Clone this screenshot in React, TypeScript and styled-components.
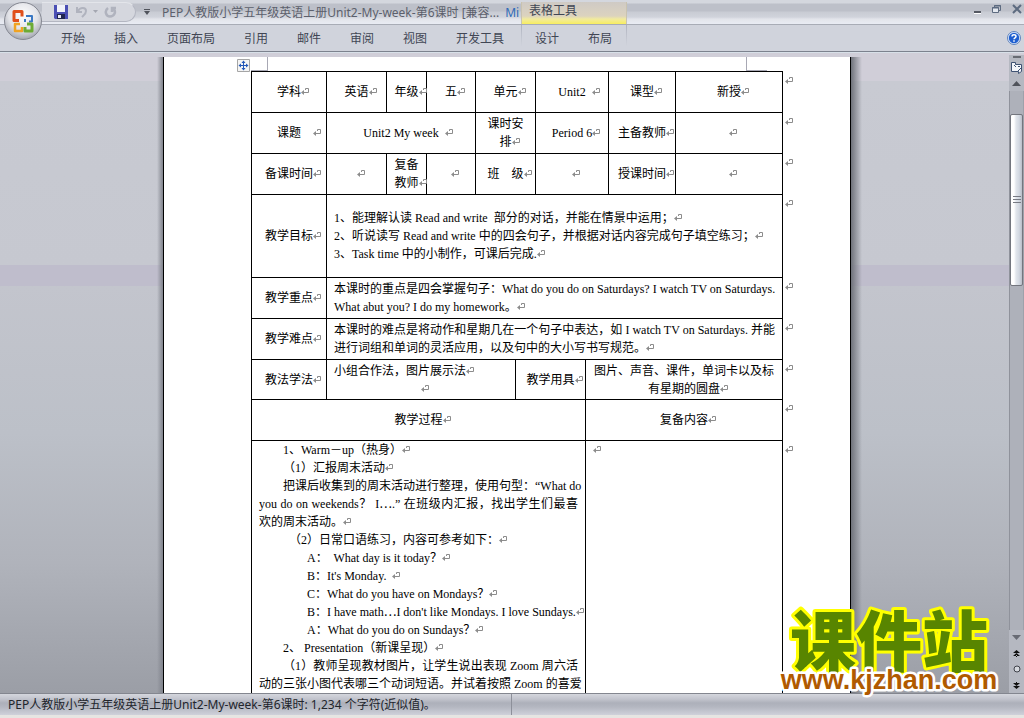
import React from "react";
import styled, { createGlobalStyle } from "styled-components";

const GlobalStyle = createGlobalStyle`
  * { box-sizing: border-box; }
  body { margin: 0; background: #d0ced8; }
  button { font: inherit; color: inherit; border: 0; padding: 0; background: none; }
`;

const Window = styled.div`
  position: relative;
  display: flex;
  flex-direction: column;
  height: 100vh;
  min-height: 300px;
  overflow: hidden;
  font: 12px/18px "Noto Sans", "Noto Sans CJK SC", sans-serif;
  color: #414654;
`;

const TitleBar = styled.header`
  display: grid;
  grid-template-columns: 162px 359px 106px 1fr;
  height: 24px;
  flex: none;
  background: linear-gradient(#d4d7de 0 3px, #bdc0c9 4px 11px, #c9ccd4 12px, #d0d3db 17px, #e2e4ea 19px, #e9ecf4 24px);
`;

const QuickAccess = styled.div`
  display: flex;
  align-items: center;
  padding-left: 42px;
  gap: 8px;
`;

const QuickPill = styled.div`
  display: flex;
  align-items: center;
  gap: 6px;
  width: 94px;
  height: 20px;
  padding-left: 12px;
  border: 1px solid #b3b6c1;
  border-top-color: #e3e5ea;
  border-left: 0;
  border-radius: 0 10px 10px 0;
  background: #d5d7de;
`;

const IconButton = styled.button`
  display: flex;
  align-items: center;
  justify-content: center;
`;

const Title = styled.div`
  display: flex;
  gap: 6px;
  overflow: hidden;
  white-space: nowrap;
  line-height: 26px;
  color: #5c606c;
`;

const AppName = styled.span`
  color: #2f6ab8;
`;

const ContextTitle = styled.div`
  margin-top: 2px;
  padding-left: 7px;
  line-height: 18px;
  border: 1px solid #c9c3b0;
  border-width: 0 1px;
  background: linear-gradient(#cfcac5, #dcd3bf 14px, #f1ea9f 17px, #f8ee60 22px);
`;

const WindowControls = styled.div`
  display: flex;
  justify-content: flex-end;
  gap: 10px;
  padding: 2px 2px 8px;
`;

const RibbonTabs = styled.nav`
  display: grid;
  grid-template-columns: 521px 106px 1fr;
  height: 28px;
  flex: none;
  border-top: 1px solid #a8acb6;
  border-bottom: 1px solid #7c828e;
  background: #d0d3dc;
`;

const TabGroup = styled.div<{ $context?: boolean }>`
  display: flex;
  gap: 29px;
  padding-top: 2px;
  padding-left: ${(p) => (p.$context ? 13 : 61)}px;
  border: 0 solid;
  border-width: ${(p) => (p.$context ? "0 1px" : "0")};
  border-image: linear-gradient(#aeb2be, #d0d3dc 80%) 1;
`;

const HelpSlot = styled.div`
  display: flex;
  justify-content: flex-end;
  padding-right: 3px;
`;

const OfficeButton = styled.button`
  position: absolute;
  left: 3px;
  top: 1px;
  width: 40px;
  height: 40px;
`;

const Workspace = styled.main`
  display: flex;
  flex: 1;
  min-height: 0;
  padding-top: 4px;
  border-top: 1px solid #d8e0e8;
  background: linear-gradient(
    #d0ced8 0 28px, #c8cad2 28px, #c6c8d0 212px, #bfbdcc 212px 233px,
    #c3c5cd 233px, #bcc0c8 380px, #b0b3bb 510px, #9b9ea6 640px
  );
`;

const Canvas = styled.div`
  display: flex;
  flex: 1;
  min-width: 0;
  justify-content: center;
  padding-left: 5px;
  overflow: hidden;
`;

const Shade = styled.div<{ $right?: boolean }>`
  width: 11px;
  background: ${(p) =>
    p.$right
      ? "linear-gradient(90deg, #6f727a, #6f727a00)"
      : "linear-gradient(270deg, #80838c, #80838c00 6px)"};
`;

const Page = styled.article`
  width: 688px;
  flex: none;
  padding: 0 0 0 87px;
  border: 1px solid #000;
  border-width: 0 1px;
  background: #fff;
  color: #000;
  font-family: "Liberation Serif", "Noto Sans CJK SC", serif;
`;

const MarginRow = styled.div`
  position: relative;
  display: flex;
  justify-content: space-between;
  width: 516px;
  height: 14px;
`;

const Corner = styled.i<{ $right?: boolean }>`
  width: ${(p) => (p.$right ? 21 : 17)}px;
  border: 1px solid #a8a8b4;
  border-width: ${(p) => (p.$right ? "0 0 1px 1px" : "0 1px 1px 0")};
`;

const MoveHandle = styled.button`
  position: absolute;
  left: -14px;
  top: 2px;
  width: 13px;
  height: 13px;
`;

const PlanTable = styled.table`
  width: 545px;
  table-layout: fixed;
  border-collapse: collapse;
`;

const Row = styled.tr<{ $h: number }>`
  height: ${(p) => p.$h}px;
`;

const Cell = styled.td<{ $text?: boolean; $top?: boolean }>`
  padding: 0 ${(p) => (p.$text ? 7 : 0)}px;
  border: 1px solid #000;
  text-align: ${(p) => (p.$text ? "left" : "center")};
  vertical-align: ${(p) => (p.$top ? "top" : "middle")};
  white-space: pre;
`;

const EndCell = styled.td`
  padding: 0 0 0 2px;
  vertical-align: top;
`;

const Line = styled.div<{ $indent?: number; $justify?: boolean; $center?: boolean }>`
  padding-left: ${(p) => p.$indent || 0}px;
  height: 18px;
  white-space: ${(p) => (p.$justify ? "nowrap" : "pre")};
  text-align: ${(p) => (p.$center ? "center" : "left")};
  text-align-last: ${(p) => (p.$justify ? "justify" : "auto")};
`;

const Han = styled.span`
  font-family: "Noto Sans CJK SC", sans-serif;
  line-height: 1;
`;

const MarkSvg = styled.svg<{ $gap: number }>`
  display: inline-block;
  width: 8px;
  height: 8px;
  margin-left: ${(p) => p.$gap}px;
  margin-right: ${(p) => -8 - p.$gap}px;
`;

const Mark = ({ gap = 0 }: { gap?: number }) => (
  <MarkSvg $gap={gap} viewBox="0 0 8 8" aria-hidden="true">
    <path d="M4.500 2V.5h3v4H2" fill="none" stroke="#8c8c8c" />
    <path d="M0 4.500L3 2v5z" fill="#8c8c8c" />
  </MarkSvg>
);

const ScrollColumn = styled.aside`
  display: flex;
  flex-direction: column;
  width: 15px;
  flex: none;
  margin-top: -2px;
`;

const ScrollButton = styled(IconButton)<{ $h: number }>`
  height: ${(p) => p.$h}px;
  flex: none;
  background: #b5b8c1;
`;

const Track = styled.div`
  flex: 1;
  min-height: 0;
  padding-top: 23px;
  border-left: 1px solid #8f929b;
  border-right: 1px solid #9ea1aa;
  background: #aeb1ba;
`;

const Thumb = styled.div`
  display: flex;
  align-items: center;
  justify-content: center;
  height: 172px;
  border: 1px solid #73767e;
  border-radius: 2px;
  background: linear-gradient(90deg, #fff 0 3px, #e2e6ec 5px, #d3d9e2 8px, #b9bec8);
`;

const StatusBar = styled.footer`
  display: grid;
  grid-template-columns: 512px 1fr;
  height: 25px;
  flex: none;
  border-top: 1px solid #83868f;
  border-bottom: 3px solid #e6e5e2;
  background: linear-gradient(#d4d6dd, #c2c4cd 5px, #adb0ba 9px, #b4b7c1 13px, #cfd1da 21px);
  color: #22252c;
`;

const StatusText = styled.div`
  padding-left: 8px;
  line-height: 21px;
  border-right: 1px solid #8d909a;
  white-space: nowrap;
`;

const Watermark = styled.svg`
  position: absolute;
  right: 14px;
  bottom: 18px;
  width: 240px;
  height: 90px;
  overflow: visible;
`;

const mainTabs = ["开始", "插入", "页面布局", "引用", "邮件", "审阅", "视图", "开发工具"];
const columns = [75, 60, 40, 49, 40, 20, 50, 23, 67, 107, 14];

const End = () => (
  <EndCell>
    <Mark />
  </EndCell>
);

export default function App() {
  return (
    <>
      <GlobalStyle />
      <Window>
        <TitleBar>
          <QuickAccess>
            <QuickPill>
              <IconButton aria-label="保存">
                <svg width="14" height="14" viewBox="0 0 14 14">
                  <path d="M0 0h14v14H1L0 13z" fill="#4a4fb4" />
                  <path d="M3 0h8v7H3z" fill="#f1f3fa" />
                  <path d="M3 9h8v5H3z" fill="#20264f" />
                  <path d="M4 10h3v3H4z" fill="#e8eaf5" />
                </svg>
              </IconButton>
              <IconButton aria-label="撤消">
                <svg width="24" height="12" viewBox="0 0 24 12" fill="none" stroke="#b0b3be" strokeWidth="2">
                  <path d="M3 1v5h5M4 5c2-4 8-4 8 0 0 3-2 4-4 6" />
                  <path d="M19 4h5l-2.500 3z" fill="#a4a7b1" stroke="none" />
                </svg>
              </IconButton>
              <IconButton aria-label="恢复">
                <svg width="14" height="12" viewBox="0 0 14 12" fill="none" stroke="#b0b3be" strokeWidth="2.500">
                  <path d="M4 2C0 5 2 10.500 6 10.500s7-4.500 3-8M8 6V2h4" />
                </svg>
              </IconButton>
            </QuickPill>
            <IconButton aria-label="自定义快速访问工具栏">
              <svg width="6" height="6" viewBox="0 0 6 6" fill="#50535c">
                <path d="M0 0h6v1H0zM0 2h6L3 6z" />
              </svg>
            </IconButton>
          </QuickAccess>
          <Title>
            <span>PEP人教版小学五年级英语上册Unit2-My-week-第6课时 [兼容...</span>
            <AppName>Mi</AppName>
          </Title>
          <ContextTitle>表格工具</ContextTitle>
          <WindowControls>
            <IconButton aria-label="最小化">
              <svg width="9" height="12" viewBox="0 0 9 12">
                <path d="M1 8h7v2H1z" fill="#555963" />
                <path d="M1 10h7v1H1z" fill="#fff" />
              </svg>
            </IconButton>
            <IconButton aria-label="还原">
              <svg width="10" height="12" viewBox="0 0 10 12" fill="none" stroke="#5d6b80">
                <path d="M2.500 4V2.500h6v5H7" />
                <path d="M.5 4.500h6v5h-6z" fill="#e4e8ef" />
                <path d="M0 5h7M2 3h7" />
              </svg>
            </IconButton>
            <IconButton aria-label="关闭">
              <svg width="10" height="12" viewBox="0 0 10 12" fill="none" stroke="#5d6b80" strokeWidth="2">
                <path d="M1 2l8 8M9 2l-8 8" />
              </svg>
            </IconButton>
          </WindowControls>
        </TitleBar>

        <RibbonTabs>
          <TabGroup>
            {mainTabs.map((t) => (
              <button key={t}>{t}</button>
            ))}
          </TabGroup>
          <TabGroup $context>
            <button>设计</button>
            <button>布局</button>
          </TabGroup>
          <HelpSlot>
            <IconButton aria-label="帮助">
              <svg width="14" height="14" viewBox="0 0 14 14">
                <circle cx="7" cy="7" r="6.500" fill="#dfe9f8" stroke="#5f83bd" />
                <circle cx="7" cy="7" r="5.200" fill="#1f5fd0" />
                <path d="M5 5.500C5 3.200 9 3.200 9 5.500 9 6.800 7 6.800 7 8.200M7 9.300v1.400" fill="none" stroke="#fff" strokeWidth="1.500" />
              </svg>
            </IconButton>
          </HelpSlot>
        </RibbonTabs>

        <Workspace>
          <Canvas>
            <Shade />
            <Page>
              <MarginRow>
                <Corner />
                <Corner $right />
                <MoveHandle aria-label="移动表格">
                  <svg width="13" height="13" viewBox="0 0 13 13">
                    <path d="M.5.5h12v12H.5z" fill="#f4f4f4" stroke="#a5a5a5" />
                    <path d="M6.500 3v7M3 6.500h7" stroke="#2458b8" />
                    <path d="M6.500 1.500l2 2.500h-4zM6.500 11.500l2-2.500h-4zM1.500 6.500L4 4.500v4zM11.500 6.500L9 4.500v4z" fill="#2458b8" />
                  </svg>
                </MoveHandle>
              </MarginRow>
              <PlanTable>
                <colgroup>
                  {columns.map((w, i) => (
                    <col key={i} style={{ width: w }} />
                  ))}
                </colgroup>
                <tbody>
                  <Row $h={41}>
                    <Cell>学科<Mark /></Cell>
                    <Cell>英语<Mark /></Cell>
                    <Cell>年级<Mark /></Cell>
                    <Cell>五<Mark /></Cell>
                    <Cell colSpan={2}>单元<Mark /></Cell>
                    <Cell colSpan={2}>Unit2<Mark gap={6} /></Cell>
                    <Cell>课型<Mark /></Cell>
                    <Cell>新授<Mark /></Cell>
                    <End />
                  </Row>
                  <Row $h={41}>
                    <Cell>课题<Mark gap={12} /></Cell>
                    <Cell colSpan={3}>Unit2 My week<Mark gap={6} /></Cell>
                    <Cell colSpan={2}>课时安{"\n"}排<Mark /></Cell>
                    <Cell colSpan={2}>Period 6<Mark /></Cell>
                    <Cell>主备教师<Mark /></Cell>
                    <Cell><Mark /></Cell>
                    <End />
                  </Row>
                  <Row $h={41}>
                    <Cell>备课时间<Mark /></Cell>
                    <Cell><Mark /></Cell>
                    <Cell>复备{"\n"}教师<Mark /></Cell>
                    <Cell><Mark /></Cell>
                    <Cell colSpan={2}>班　级<Mark /></Cell>
                    <Cell colSpan={2}><Mark /></Cell>
                    <Cell>授课时间<Mark /></Cell>
                    <Cell><Mark /></Cell>
                    <End />
                  </Row>
                  <Row $h={83}>
                    <Cell>教学目标<Mark /></Cell>
                    <Cell colSpan={9} $text>
                      <Line>1、能理解认读 Read and write  部分的对话，并能在情景中运用；<Mark /></Line>
                      <Line>2、听说读写 Read and write 中的四会句子，并根据对话内容完成句子填空练习；<Mark /></Line>
                      <Line>3、Task time 中的小制作，可课后完成.<Mark /></Line>
                    </Cell>
                    <End />
                  </Row>
                  <Row $h={41}>
                    <Cell>教学重点<Mark /></Cell>
                    <Cell colSpan={9} $text>
                      <Line $justify>本课时的重点是四会掌握句子：What do you do on Saturdays? I watch TV on Saturdays.</Line>
                      <Line>What abut you? I do my homework。<Mark /></Line>
                    </Cell>
                    <End />
                  </Row>
                  <Row $h={41}>
                    <Cell>教学难点<Mark /></Cell>
                    <Cell colSpan={9} $text>
                      <Line $justify>本课时的难点是将动作和星期几在一个句子中表达，如 I watch TV on Saturdays. 并能</Line>
                      <Line>进行词组和单词的灵活应用，以及句中的大小写书写规范。<Mark /></Line>
                    </Cell>
                    <End />
                  </Row>
                  <Row $h={40}>
                    <Cell>教法学法<Mark /></Cell>
                    <Cell colSpan={4} $text>
                      <Line>小组合作法，图片展示法<Mark /></Line>
                      <Line $center><Mark /></Line>
                    </Cell>
                    <Cell colSpan={2}>教学用具<Mark /></Cell>
                    <Cell colSpan={3}>图片、声音、课件，单词卡以及标{"\n"}有星期的圆盘<Mark /></Cell>
                    <End />
                  </Row>
                  <Row $h={41}>
                    <Cell colSpan={7}>教学过程<Mark /></Cell>
                    <Cell colSpan={3}>复备内容<Mark /></Cell>
                    <End />
                  </Row>
                  <Row $h={270}>
                    <Cell colSpan={7} $text $top>
                      <Line $indent={24}>1、Warm－up（热身）<Mark /></Line>
                      <Line $indent={24}>（1）汇报周末活动<Mark /></Line>
                      <Line $indent={24} $justify>把课后收集到的周末活动进行整理，使用句型：“What do</Line>
                      <Line $justify>you do on weekends？ I<Han>…</Han>.” 在班级内汇报，找出学生们最喜</Line>
                      <Line>欢的周末活动。<Mark /></Line>
                      <Line $indent={30}>（2）日常口语练习，内容可参考如下：<Mark /></Line>
                      <Line $indent={48}>A：  What day is it today？<Mark /></Line>
                      <Line $indent={48}>B：It's Monday.  <Mark /></Line>
                      <Line $indent={48}>C：What do you have on Mondays？<Mark /></Line>
                      <Line $indent={48}>B：I have math<Han>…</Han>I don't like Mondays. I love Sundays.<Mark /></Line>
                      <Line $indent={48}>A：What do you do on Sundays？<Mark /></Line>
                      <Line $indent={24}>2、 Presentation（新课呈现）<Mark /></Line>
                      <Line $indent={24} $justify>（1）教师呈现教材图片，让学生说出表现 Zoom 周六活</Line>
                      <Line $justify>动的三张小图代表哪三个动词短语。并试着按照 Zoom 的喜爱</Line>
                    </Cell>
                    <Cell colSpan={3} $text $top>
                      <Mark />
                    </Cell>
                    <End />
                  </Row>
                </tbody>
              </PlanTable>
            </Page>
            <Shade $right />
          </Canvas>
          <ScrollColumn>
            <ScrollButton $h={4} aria-label="拆分">
              <svg width="8" height="2"><path d="M0 0h8v2H0z" fill="#686b73" /></svg>
            </ScrollButton>
            <ScrollButton $h={17} aria-label="标尺">
              <svg width="13" height="13" viewBox="0 0 13 13" fill="#f3f5f9" stroke="#3f5272">
                <path d="M1.500 1.500h4v2h6v7l-3 2v-2h-7z" />
                <path d="M4 4l2 2M8 5.500h2M8 10l3-3" />
              </svg>
            </ScrollButton>
            <ScrollButton $h={15} aria-label="向上滚动">
              <svg width="9" height="5"><path d="M0 5h9L4.500 0z" fill="#50535b" /></svg>
            </ScrollButton>
            <Track>
              <Thumb>
                <svg width="8" height="9"><path d="M0 .5h8M0 3.500h8M0 6.500h8" stroke="#787b84" /></svg>
              </Thumb>
            </Track>
            <ScrollButton $h={15} aria-label="向下滚动">
              <svg width="9" height="5"><path d="M0 0h9L4.500 5z" fill="#686b74" /></svg>
            </ScrollButton>
            <ScrollButton $h={16} aria-label="前一页">
              <svg width="7" height="7"><path d="M0 3h7L3.500 0zM0 6h7L3.500 3zM3 5h1v2H3z" fill="#111" /></svg>
            </ScrollButton>
            <ScrollButton $h={16} aria-label="选择浏览对象">
              <svg width="8" height="8"><circle cx="4" cy="4" r="3" fill="#d4d7dd" stroke="#3f424a" /></svg>
            </ScrollButton>
            <ScrollButton $h={16} aria-label="下一页">
              <svg width="7" height="7"><path d="M0 1h7L3.500 4zM0 4h7L3.500 7zM3 0h1v2H3z" fill="#111" /></svg>
            </ScrollButton>
          </ScrollColumn>
        </Workspace>

        <StatusBar>
          <StatusText>PEP人教版小学五年级英语上册Unit2-My-week-第6课时: 1,234 个字符(近似值)。</StatusText>
        </StatusBar>

        <OfficeButton aria-label="Office 按钮">
          <svg width="40" height="40" viewBox="0 0 40 40">
            <defs>
              <radialGradient id="orb" cx="50%" cy="35%" r="65%">
                <stop offset="0" stopColor="#fff" />
                <stop offset=".6" stopColor="#e2e3e8" />
                <stop offset="1" stopColor="#a3a6b0" />
              </radialGradient>
            </defs>
            <circle cx="20" cy="20" r="18.500" fill="url(#orb)" stroke="#858892" />
            <g fill="none" strokeWidth="3" strokeLinejoin="round">
              <path d="M16 19.500h-5v-9h8v5" stroke="#e0501c" />
              <path d="M23 15h6v5.500h-3M22 18v3" stroke="#3a78c4" strokeWidth="2" />
              <path d="M17 23h-5v7h7v-4" stroke="#f0a323" strokeWidth="2.500" />
              <path d="M22 26v4h7v-7h-5" stroke="#6cab35" />
            </g>
          </svg>
        </OfficeButton>

        <Watermark viewBox="0 0 240 90" aria-label="课件站 www.kjzhan.com">
          <g strokeLinejoin="round" paintOrder="stroke" textAnchor="middle" fontWeight="900">
            <text x="119" y="56" fontSize="66" fontFamily="'Noto Sans CJK SC', sans-serif" fill="#588500" stroke="#ffff00" strokeWidth="6">课件站</text>
            <text x="119" y="79" fontSize="27" fontFamily="'Liberation Sans', sans-serif" fill="#b05a00" stroke="#fff" strokeWidth="5">www.kjzhan.com</text>
          </g>
        </Watermark>
      </Window>
    </>
  );
}
